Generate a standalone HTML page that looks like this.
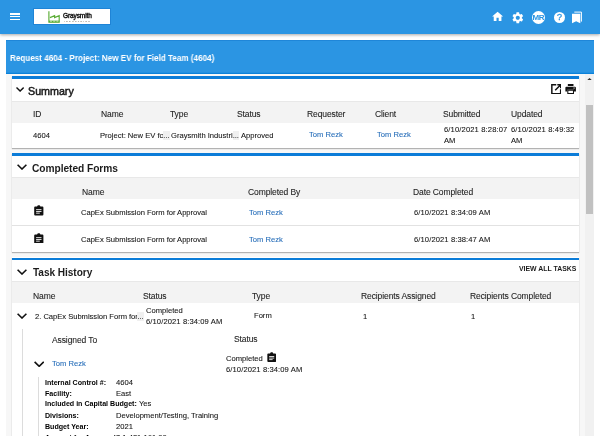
<!DOCTYPE html>
<html><head><meta charset="utf-8"><style>
html,body{margin:0;padding:0;width:600px;height:436px;overflow:hidden;background:#fff;font-family:"Liberation Sans", sans-serif;}
.t{position:absolute;white-space:nowrap;font-family:"Liberation Sans", sans-serif;will-change:transform;}
.r{position:absolute;}
</style></head><body>
<div class="r" style="left:0px;top:0px;width:600px;height:34px;background:#2b95e3;box-shadow:0 1px 3px rgba(0,0,0,.35);z-index:5"></div>
<div class="r" style="left:10px;top:13.3px;width:10px;height:1.4px;background:#fff;z-index:6"></div>
<div class="r" style="left:10px;top:16.0px;width:10px;height:1.4px;background:#fff;z-index:6"></div>
<div class="r" style="left:10px;top:18.7px;width:10px;height:1.4px;background:#fff;z-index:6"></div>
<div class="r" style="left:34px;top:9px;width:76px;height:15.3px;background:#fff;z-index:6;box-shadow:0 0 0 1px #1f84d6"></div>
<svg class="r" style="left:47px;top:10px;width:14px;height:14px;z-index:7" viewBox="0 0 14 14"><path d="M1.9 1.2 V12.2 H12.2 V5.6 L7.6 7.6 V5.6 L3 7.6" fill="none" stroke="#5aac35" stroke-width="1.15"/><rect x="1.9" y="10.6" width="10.3" height="1.6" fill="#5aac35"/><rect x="3" y="10.9" width="2" height="0.6" fill="#e6f2e0"/><rect x="6.2" y="10.9" width="2" height="0.6" fill="#e6f2e0"/><rect x="9.4" y="10.9" width="2" height="0.6" fill="#e6f2e0"/></svg>
<div class="t" style="left:63px;top:13.30px;font-size:6.500px;line-height:6.500px;color:#1a1a1a;font-weight:400;letter-spacing:-0.100px;z-index:7;-webkit-text-stroke:0.4px #111">Graysmith</div>
<div class="t" style="left:64px;top:20.97px;font-size:2.400px;line-height:2.400px;color:#8a7a6a;font-weight:700;letter-spacing:0.300px;z-index:7">I N D U S T R I E S</div>
<svg class="r" style="left:490.9px;top:10.4px;width:13.2px;height:13.2px;z-index:7" viewBox="0 0 24 24"><path fill="#fff" d="M10 20v-6h4v6h5v-8h3L12 3 2 12h3v8z"/></svg>
<svg class="r" style="left:510.8px;top:10.6px;width:13.6px;height:13.6px;z-index:7" viewBox="0 0 24 24"><path fill="#fff" d="M19.14 12.94c.04-.3.06-.61.06-.94 0-.32-.02-.64-.07-.94l2.03-1.58a.49.49 0 0 0 .12-.61l-1.92-3.32a.488.488 0 0 0-.59-.22l-2.39.96c-.5-.38-1.03-.7-1.62-.94l-.36-2.54a.484.484 0 0 0-.48-.41h-3.84c-.24 0-.43.17-.47.41l-.36 2.54c-.59.24-1.13.57-1.62.94l-2.39-.96c-.22-.08-.47 0-.59.22L2.74 8.87c-.12.21-.08.47.12.61l2.03 1.58c-.05.3-.09.63-.09.94s.02.64.07.94l-2.03 1.58a.49.49 0 0 0-.12.61l1.92 3.32c.12.22.37.29.59.22l2.39-.96c.5.38 1.03.7 1.62.94l.36 2.54c.05.24.24.41.48.41h3.84c.24 0 .44-.17.47-.41l.36-2.54c.59-.24 1.13-.56 1.62-.94l2.39.96c.22.08.47 0 .59-.22l1.92-3.32c.12-.22.07-.47-.12-.61l-2.01-1.58zM12 15.6c-1.98 0-3.6-1.62-3.6-3.6s1.62-3.6 3.6-3.6 3.6 1.62 3.6 3.6-1.62 3.6-3.6 3.6z"/></svg>
<div class="r" style="left:531.9px;top:10.5px;width:13.5px;height:13.5px;background:#fff;border-radius:50%;z-index:6"></div>
<div class="t" style="left:531.4px;top:13.83px;font-size:8.000px;line-height:8.000px;color:#2b95e3;font-weight:700;letter-spacing:-0.500px;z-index:7;width:14.5px;text-align:center">MR</div>
<div class="r" style="left:553.6px;top:11.6px;width:11.1px;height:11.1px;background:#fff;border-radius:50%;z-index:6"></div>
<div class="t" style="left:553.6px;top:12.98px;font-size:9.000px;line-height:9.000px;color:#2b95e3;font-weight:400;letter-spacing:0.000px;z-index:7;width:11.1px;text-align:center;-webkit-text-stroke:0.3px #2b95e3">?</div>
<svg class="r" style="left:572px;top:10.5px;width:11px;height:13px;z-index:7" viewBox="0 0 11 13"><path d="M0 2.7 H8.3 V12.3 L4.15 10.2 L0 12.3 Z" fill="#fff"/><path d="M2.3 1.1 H9.4 V10.6" fill="none" stroke="#fff" stroke-width="1"/></svg>
<div class="r" style="left:6px;top:40px;width:588px;height:34px;background:#2b95e3;box-shadow:inset 0 1px 0 #1f86d8, inset 0 -1.2px 0 #0b82da"></div>
<div class="t" style="left:10.1px;top:53.87px;font-size:8.900px;line-height:8.900px;color:#fff;font-weight:700;letter-spacing:0.000px;transform:scaleX(0.913);transform-origin:0 0">Request 4604 - Project: New EV for Field Team (4604)</div>
<div class="r" style="left:6px;top:74px;width:588px;height:362px;background:#f7f7f7"></div>
<div class="r" style="left:585px;top:74px;width:9px;height:362px;background:#f1f1f1"></div>
<svg class="r" style="left:586px;top:76px;width:7px;height:6px" viewBox="0 0 7 6"><path d="M1.3 4.1 L3.5 1.9 L5.7 4.1 Z" fill="#333"/></svg>
<div class="r" style="left:586px;top:105px;width:7px;height:108.5px;background:#c1c1c1"></div>
<div class="r" style="left:12px;top:76px;width:567px;height:72px;background:#fff;box-shadow:0 1px 1px rgba(0,0,0,.28)"></div>
<div class="r" style="left:12px;top:76px;width:567px;height:2.6px;background:#0b7cd8"></div>
<svg class="r" style="left:15.8px;top:87px;width:8.2px;height:4.9px" viewBox="0 0 10 6"><path d="M0.6 0.7 L5 5 L9.4 0.7" fill="none" stroke="#111" stroke-width="1.7"/></svg>
<div class="t" style="left:28px;top:85.74px;font-size:10.700px;line-height:10.700px;color:#1c1c1c;font-weight:400;letter-spacing:0.000px;-webkit-text-stroke:0.5px #1c1c1c">Summary</div>
<svg class="r" style="left:550.5px;top:83.5px;width:10.5px;height:10.5px" viewBox="0 0 10 10"><path d="M5 0.8 H0.8 V9.2 H9.2 V5" fill="none" stroke="#111" stroke-width="1.4"/><path d="M4 6 L9 1 M6 0.8 H9.2 V4" fill="none" stroke="#111" stroke-width="1.4"/></svg>
<svg class="r" style="left:564.8px;top:83.8px;width:11.3px;height:10px" viewBox="0 0 12 10" preserveAspectRatio="none"><rect x="3" y="0" width="6" height="2" fill="#111"/><path d="M1.5 2.7 H10.5 Q11.6 2.7 11.6 3.8 V7.5 H9.5 V5.8 H2.5 V7.5 H0.4 V3.8 Q0.4 2.7 1.5 2.7 Z" fill="#111"/><path d="M3 6.3 H9 V9.6 H3 Z" fill="none" stroke="#111" stroke-width="1.1"/><rect x="9" y="3.6" width="1.3" height="0.9" fill="#fff"/></svg>
<div class="r" style="left:12px;top:100.5px;width:567px;height:21px;background:#f3f3f3;border-top:1px solid #e8e8e8"></div>
<div class="t" style="left:32.6px;top:110.30px;font-size:8.500px;line-height:8.500px;color:#222;font-weight:400;letter-spacing:-0.100px;;-webkit-text-stroke:0.08px #222">ID</div>
<div class="t" style="left:101px;top:110.30px;font-size:8.500px;line-height:8.500px;color:#222;font-weight:400;letter-spacing:-0.100px;;-webkit-text-stroke:0.08px #222">Name</div>
<div class="t" style="left:169.6px;top:110.30px;font-size:8.500px;line-height:8.500px;color:#222;font-weight:400;letter-spacing:-0.100px;;-webkit-text-stroke:0.08px #222">Type</div>
<div class="t" style="left:237.4px;top:110.30px;font-size:8.500px;line-height:8.500px;color:#222;font-weight:400;letter-spacing:-0.100px;;-webkit-text-stroke:0.08px #222">Status</div>
<div class="t" style="left:306.5px;top:110.30px;font-size:8.500px;line-height:8.500px;color:#222;font-weight:400;letter-spacing:-0.100px;;-webkit-text-stroke:0.08px #222">Requester</div>
<div class="t" style="left:374.7px;top:110.30px;font-size:8.500px;line-height:8.500px;color:#222;font-weight:400;letter-spacing:-0.100px;;-webkit-text-stroke:0.08px #222">Client</div>
<div class="t" style="left:442.5px;top:110.30px;font-size:8.500px;line-height:8.500px;color:#222;font-weight:400;letter-spacing:-0.100px;;-webkit-text-stroke:0.08px #222">Submitted</div>
<div class="t" style="left:511.2px;top:110.30px;font-size:8.500px;line-height:8.500px;color:#222;font-weight:400;letter-spacing:-0.100px;;-webkit-text-stroke:0.08px #222">Updated</div>
<div class="t" style="left:32.6px;top:131.57px;font-size:7.600px;line-height:7.600px;color:#141414;font-weight:400;letter-spacing:0.000px;;-webkit-text-stroke:0.08px #141414">4604</div>
<div class="t" style="left:100.3px;top:131.57px;font-size:7.600px;line-height:7.600px;color:#141414;font-weight:400;letter-spacing:0.000px;;-webkit-text-stroke:0.08px #141414">Project: New EV fc<span style="background:#f0f0f0">...</span></div>
<div class="t" style="left:170.7px;top:131.57px;font-size:7.600px;line-height:7.600px;color:#141414;font-weight:400;letter-spacing:0.000px;;-webkit-text-stroke:0.08px #141414">Graysmith Industri<span style="background:#f0f0f0">...</span></div>
<div class="t" style="left:241.4px;top:131.57px;font-size:7.600px;line-height:7.600px;color:#141414;font-weight:400;letter-spacing:0.000px;;-webkit-text-stroke:0.08px #141414">Approved</div>
<div class="t" style="left:308.9px;top:131.37px;font-size:7.600px;line-height:7.600px;color:#246cb8;font-weight:400;letter-spacing:0.000px;;-webkit-text-stroke:0.08px #246cb8">Tom Rezk</div>
<div class="t" style="left:376.5px;top:131.37px;font-size:7.600px;line-height:7.600px;color:#246cb8;font-weight:400;letter-spacing:0.000px;;-webkit-text-stroke:0.08px #246cb8">Tom Rezk</div>
<div class="t" style="left:443.7px;top:126.07px;font-size:7.600px;line-height:7.600px;color:#141414;font-weight:400;letter-spacing:0.130px;;-webkit-text-stroke:0.08px #141414">6/10/2021 8:28:07</div>
<div class="t" style="left:443.7px;top:136.57px;font-size:7.600px;line-height:7.600px;color:#141414;font-weight:400;letter-spacing:0.000px;;-webkit-text-stroke:0.08px #141414">AM</div>
<div class="t" style="left:511.2px;top:126.07px;font-size:7.600px;line-height:7.600px;color:#141414;font-weight:400;letter-spacing:0.130px;;-webkit-text-stroke:0.08px #141414">6/10/2021 8:49:32</div>
<div class="t" style="left:511.2px;top:136.57px;font-size:7.600px;line-height:7.600px;color:#141414;font-weight:400;letter-spacing:0.000px;;-webkit-text-stroke:0.08px #141414">AM</div>
<div class="r" style="left:12px;top:153px;width:567px;height:99px;background:#fff;box-shadow:0 1px 1px rgba(0,0,0,.28)"></div>
<div class="r" style="left:12px;top:153px;width:567px;height:3px;background:#0b7cd8"></div>
<svg class="r" style="left:17px;top:164.4px;width:10px;height:6px" viewBox="0 0 10 6"><path d="M0.6 0.7 L5 5 L9.4 0.7" fill="none" stroke="#111" stroke-width="1.6"/></svg>
<div class="t" style="left:32px;top:164.17px;font-size:10.200px;line-height:10.200px;color:#1c1c1c;font-weight:700;letter-spacing:-0.050px;">Completed Forms</div>
<div class="r" style="left:12px;top:177px;width:567px;height:21px;background:#f3f3f3;border-top:1px solid #e8e8e8"></div>
<div class="t" style="left:81.6px;top:187.80px;font-size:8.500px;line-height:8.500px;color:#222;font-weight:400;letter-spacing:-0.100px;;-webkit-text-stroke:0.08px #222">Name</div>
<div class="t" style="left:247.6px;top:187.80px;font-size:8.500px;line-height:8.500px;color:#222;font-weight:400;letter-spacing:-0.100px;;-webkit-text-stroke:0.08px #222">Completed By</div>
<div class="t" style="left:413.3px;top:187.80px;font-size:8.500px;line-height:8.500px;color:#222;font-weight:400;letter-spacing:-0.100px;;-webkit-text-stroke:0.08px #222">Date Completed</div>
<svg class="r" style="left:34.4px;top:205.4px;width:9.6px;height:10.6px" viewBox="0 0 10 11"><path d="M1.2 1.6 H3.3 Q3.5 0.2 5 0.2 Q6.5 0.2 6.7 1.6 H8.8 Q9.8 1.6 9.8 2.6 V10 Q9.8 11 8.8 11 H1.2 Q0.2 11 0.2 10 V2.6 Q0.2 1.6 1.2 1.6 Z" fill="#111"/><rect x="2.2" y="4.4" width="5.6" height="0.9" fill="#fff"/><rect x="2.2" y="6.2" width="5.6" height="0.9" fill="#fff"/><rect x="2.2" y="8" width="3.8" height="0.9" fill="#fff"/><rect x="3.8" y="0.9" width="2.4" height="1.6" fill="#111"/></svg>
<div class="t" style="left:81px;top:208.57px;font-size:7.600px;line-height:7.600px;color:#141414;font-weight:400;letter-spacing:-0.020px;;-webkit-text-stroke:0.08px #141414">CapEx Submission Form for Approval</div>
<div class="t" style="left:249px;top:208.57px;font-size:7.600px;line-height:7.600px;color:#246cb8;font-weight:400;letter-spacing:0.000px;;-webkit-text-stroke:0.08px #246cb8">Tom Rezk</div>
<div class="t" style="left:413.7px;top:208.57px;font-size:7.600px;line-height:7.600px;color:#141414;font-weight:400;letter-spacing:0.100px;;-webkit-text-stroke:0.08px #141414">6/10/2021 8:34:09 AM</div>
<div class="r" style="left:12px;top:224.8px;width:567px;height:0.8px;background:#e2e2e2"></div>
<svg class="r" style="left:34.4px;top:232.6px;width:9.6px;height:10.6px" viewBox="0 0 10 11"><path d="M1.2 1.6 H3.3 Q3.5 0.2 5 0.2 Q6.5 0.2 6.7 1.6 H8.8 Q9.8 1.6 9.8 2.6 V10 Q9.8 11 8.8 11 H1.2 Q0.2 11 0.2 10 V2.6 Q0.2 1.6 1.2 1.6 Z" fill="#111"/><rect x="2.2" y="4.4" width="5.6" height="0.9" fill="#fff"/><rect x="2.2" y="6.2" width="5.6" height="0.9" fill="#fff"/><rect x="2.2" y="8" width="3.8" height="0.9" fill="#fff"/><rect x="3.8" y="0.9" width="2.4" height="1.6" fill="#111"/></svg>
<div class="t" style="left:81px;top:236.07px;font-size:7.600px;line-height:7.600px;color:#141414;font-weight:400;letter-spacing:-0.020px;;-webkit-text-stroke:0.08px #141414">CapEx Submission Form for Approval</div>
<div class="t" style="left:249px;top:236.07px;font-size:7.600px;line-height:7.600px;color:#246cb8;font-weight:400;letter-spacing:0.000px;;-webkit-text-stroke:0.08px #246cb8">Tom Rezk</div>
<div class="t" style="left:413.7px;top:236.07px;font-size:7.600px;line-height:7.600px;color:#141414;font-weight:400;letter-spacing:0.100px;;-webkit-text-stroke:0.08px #141414">6/10/2021 8:38:47 AM</div>
<div class="r" style="left:12px;top:257.4px;width:567px;height:200px;background:#fff;box-shadow:0 1px 1px rgba(0,0,0,.28)"></div>
<div class="r" style="left:12px;top:257.5px;width:567px;height:2.7px;background:#0b7cd8"></div>
<svg class="r" style="left:17px;top:268.6px;width:10px;height:6px" viewBox="0 0 10 6"><path d="M0.6 0.7 L5 5 L9.4 0.7" fill="none" stroke="#111" stroke-width="1.6"/></svg>
<div class="t" style="left:32.6px;top:268.45px;font-size:10.100px;line-height:10.100px;color:#1c1c1c;font-weight:700;letter-spacing:-0.050px;">Task History</div>
<div class="t" style="left:518.7px;top:265.76px;font-size:6.900px;line-height:6.900px;color:#1a1a1a;font-weight:700;letter-spacing:0.000px;">VIEW ALL TASKS</div>
<div class="r" style="left:12px;top:280.7px;width:567px;height:21.3px;background:#f3f3f3;border-top:1px solid #e8e8e8"></div>
<div class="t" style="left:32.6px;top:291.80px;font-size:8.500px;line-height:8.500px;color:#222;font-weight:400;letter-spacing:-0.100px;;-webkit-text-stroke:0.08px #222">Name</div>
<div class="t" style="left:142.7px;top:291.80px;font-size:8.500px;line-height:8.500px;color:#222;font-weight:400;letter-spacing:-0.100px;;-webkit-text-stroke:0.08px #222">Status</div>
<div class="t" style="left:251.7px;top:291.80px;font-size:8.500px;line-height:8.500px;color:#222;font-weight:400;letter-spacing:-0.100px;;-webkit-text-stroke:0.08px #222">Type</div>
<div class="t" style="left:361px;top:291.80px;font-size:8.500px;line-height:8.500px;color:#222;font-weight:400;letter-spacing:-0.100px;;-webkit-text-stroke:0.08px #222">Recipients Assigned</div>
<div class="t" style="left:470.3px;top:291.80px;font-size:8.500px;line-height:8.500px;color:#222;font-weight:400;letter-spacing:-0.100px;;-webkit-text-stroke:0.08px #222">Recipients Completed</div>
<svg class="r" style="left:17px;top:313px;width:10px;height:6px" viewBox="0 0 10 6"><path d="M0.6 0.7 L5 5 L9.4 0.7" fill="none" stroke="#111" stroke-width="1.6"/></svg>
<div class="t" style="left:35px;top:312.77px;font-size:7.600px;line-height:7.600px;color:#141414;font-weight:400;letter-spacing:-0.020px;;-webkit-text-stroke:0.08px #141414">2. CapEx Submission Form for<span style="background:#f0f0f0">...</span></div>
<div class="t" style="left:146px;top:306.87px;font-size:7.600px;line-height:7.600px;color:#141414;font-weight:400;letter-spacing:0.000px;;-webkit-text-stroke:0.08px #141414">Completed</div>
<div class="t" style="left:146px;top:317.57px;font-size:7.600px;line-height:7.600px;color:#141414;font-weight:400;letter-spacing:0.100px;;-webkit-text-stroke:0.08px #141414">6/10/2021 8:34:09 AM</div>
<div class="t" style="left:254px;top:312.47px;font-size:7.600px;line-height:7.600px;color:#141414;font-weight:400;letter-spacing:0.000px;;-webkit-text-stroke:0.08px #141414">Form</div>
<div class="t" style="left:363px;top:313.17px;font-size:7.600px;line-height:7.600px;color:#141414;font-weight:400;letter-spacing:0.000px;;-webkit-text-stroke:0.08px #141414">1</div>
<div class="t" style="left:471.4px;top:313.17px;font-size:7.600px;line-height:7.600px;color:#141414;font-weight:400;letter-spacing:0.000px;;-webkit-text-stroke:0.08px #141414">1</div>
<div class="r" style="left:22px;top:329px;width:0.9px;height:120px;background:#dcdcdc"></div>
<div class="t" style="left:52px;top:335.80px;font-size:8.500px;line-height:8.500px;color:#222;font-weight:400;letter-spacing:-0.100px;;-webkit-text-stroke:0.08px #222">Assigned To</div>
<div class="t" style="left:234px;top:335.40px;font-size:8.500px;line-height:8.500px;color:#222;font-weight:400;letter-spacing:-0.100px;;-webkit-text-stroke:0.08px #222">Status</div>
<svg class="r" style="left:33.6px;top:361px;width:10.4px;height:6.4px" viewBox="0 0 10 6"><path d="M0.6 0.7 L5 5 L9.4 0.7" fill="none" stroke="#111" stroke-width="1.6"/></svg>
<div class="t" style="left:52px;top:360.17px;font-size:7.600px;line-height:7.600px;color:#246cb8;font-weight:400;letter-spacing:0.000px;;-webkit-text-stroke:0.08px #246cb8">Tom Rezk</div>
<div class="t" style="left:226px;top:354.57px;font-size:7.600px;line-height:7.600px;color:#141414;font-weight:400;letter-spacing:0.000px;;-webkit-text-stroke:0.08px #141414">Completed</div>
<svg class="r" style="left:267px;top:352px;width:9.4px;height:10px" viewBox="0 0 10 11"><path d="M1.2 1.6 H3.3 Q3.5 0.2 5 0.2 Q6.5 0.2 6.7 1.6 H8.8 Q9.8 1.6 9.8 2.6 V10 Q9.8 11 8.8 11 H1.2 Q0.2 11 0.2 10 V2.6 Q0.2 1.6 1.2 1.6 Z" fill="#111"/><rect x="2.2" y="4.4" width="5.6" height="0.9" fill="#fff"/><rect x="2.2" y="6.2" width="5.6" height="0.9" fill="#fff"/><rect x="2.2" y="8" width="3.8" height="0.9" fill="#fff"/><rect x="3.8" y="0.9" width="2.4" height="1.6" fill="#111"/></svg>
<div class="t" style="left:226px;top:365.57px;font-size:7.600px;line-height:7.600px;color:#141414;font-weight:400;letter-spacing:0.100px;;-webkit-text-stroke:0.08px #141414">6/10/2021 8:34:09 AM</div>
<div class="r" style="left:38px;top:377px;width:0.9px;height:80px;background:#dcdcdc"></div>
<div class="t" style="left:45px;top:379.89px;font-size:7.100px;line-height:7.100px;color:#000;font-weight:700;letter-spacing:0.000px;">Internal Control #:</div>
<div class="t" style="left:115.7px;top:378.87px;font-size:7.600px;line-height:7.600px;color:#141414;font-weight:400;letter-spacing:0.000px;;-webkit-text-stroke:0.08px #141414">4604</div>
<div class="t" style="left:45px;top:390.59px;font-size:7.100px;line-height:7.100px;color:#000;font-weight:700;letter-spacing:0.000px;">Facility:</div>
<div class="t" style="left:115.7px;top:389.57px;font-size:7.600px;line-height:7.600px;color:#141414;font-weight:400;letter-spacing:0.000px;;-webkit-text-stroke:0.08px #141414">East</div>
<div class="t" style="left:45px;top:401.29px;font-size:7.100px;line-height:7.100px;color:#000;font-weight:700;letter-spacing:0.000px;">Included in Capital Budget:</div>
<div class="t" style="left:139px;top:400.27px;font-size:7.600px;line-height:7.600px;color:#141414;font-weight:400;letter-spacing:0.000px;;-webkit-text-stroke:0.08px #141414">Yes</div>
<div class="t" style="left:45px;top:413.09px;font-size:7.100px;line-height:7.100px;color:#000;font-weight:700;letter-spacing:0.000px;">Divisions:</div>
<div class="t" style="left:115.7px;top:412.07px;font-size:7.600px;line-height:7.600px;color:#141414;font-weight:400;letter-spacing:0.000px;;-webkit-text-stroke:0.08px #141414">Development/Testing, Training</div>
<div class="t" style="left:45px;top:423.79px;font-size:7.100px;line-height:7.100px;color:#000;font-weight:700;letter-spacing:0.000px;">Budget Year:</div>
<div class="t" style="left:115.7px;top:422.77px;font-size:7.600px;line-height:7.600px;color:#141414;font-weight:400;letter-spacing:0.000px;;-webkit-text-stroke:0.08px #141414">2021</div>
<div class="t" style="left:45px;top:435.19px;font-size:7.100px;line-height:7.100px;color:#000;font-weight:700;letter-spacing:0.000px;">Amount for Approval:</div>
<div class="t" style="left:115.7px;top:434.17px;font-size:7.600px;line-height:7.600px;color:#141414;font-weight:400;letter-spacing:0.000px;;-webkit-text-stroke:0.08px #141414">$ 1,421,161.00</div>
</body></html>
